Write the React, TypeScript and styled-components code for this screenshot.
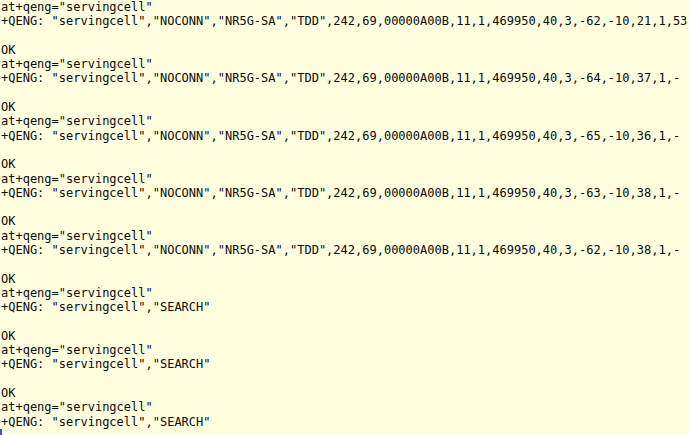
import React from "react";
import styled, { createGlobalStyle } from "styled-components";

const Global = createGlobalStyle`
  html, body { margin: 0; padding: 0; background: #ffffe0; }
  body { overflow: hidden; }
`;

const Terminal = styled.div`
  box-sizing: border-box;
  width: 689px;
  height: 435px;
  padding: 0 0 0 1px;
  background: #ffffe0;
  color: #0a0a0a;
  font-family: "DejaVu Sans Mono", "Liberation Mono", monospace;
  font-size: 12px;
  line-height: 14.3px;
  white-space: pre;
  overflow: hidden;
  position: relative;
`;

const Line = styled.div`
  height: 14.3px;
`;

const Cursor = styled.span`
  position: absolute;
  left: 0;
  bottom: 0;
  width: 2px;
  height: 6px;
  background: #3a4fd0;
`;

const rows: string[][] = [
  ["-62", "-10", "21", "1", "53"],
  ["-64", "-10", "37", "1", "-"],
  ["-65", "-10", "36", "1", "-"],
  ["-63", "-10", "38", "1", "-"],
  ["-62", "-10", "38", "1", "-"],
];

export default function App() {
  const lines: string[] = [];
  rows.forEach((r, i) => {
    if (i > 0) lines.push("OK");
    lines.push('at+qeng="servingcell"');
    lines.push(
      `+QENG: "servingcell","NOCONN","NR5G-SA","TDD",242,69,00000A00B,11,1,469950,40,3,${r.join(",")}`
    );
    lines.push("");
  });
  for (let i = 0; i < 3; i++) {
    lines.push("OK");
    lines.push('at+qeng="servingcell"');
    lines.push('+QENG: "servingcell","SEARCH"');
    if (i < 2) lines.push("");
  }
  return (
    <>
      <Global />
      <Terminal>
        {lines.map((l, i) => (
          <Line key={i}>{l}</Line>
        ))}
        <Cursor />
      </Terminal>
    </>
  );
}
